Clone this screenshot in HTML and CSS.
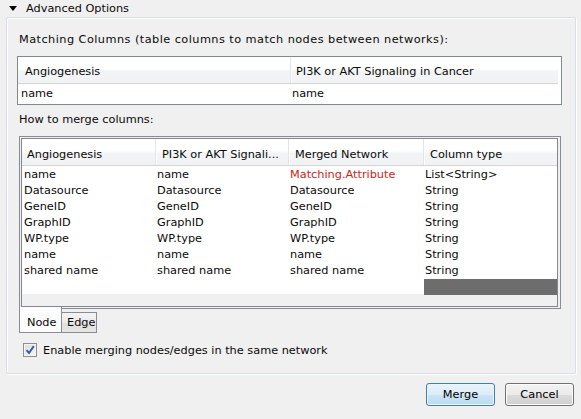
FILE: index.html
```html
<!DOCTYPE html>
<html>
<head>
<meta charset="utf-8">
<link rel="stylesheet" href="styles.css">
</head>
<body>
<div class="toggle"><span class="tri"></span><span>Advanced Options</span></div>
<div class="panel">
  <div class="label l1">Matching Columns (table columns to match nodes between networks):</div>
  <div class="table t1">
    <div class="thead g2">
      <div class="th first">Angiogenesis</div>
      <div class="th">PI3K or AKT Signaling in Cancer</div>
    </div>
    <div class="row1 g2">
      <div class="c1">name</div>
      <div class="c2">name</div>
    </div>
  </div>
  <div class="label l2">How to merge columns:</div>
  <div class="tabpane">
    <div class="tabcontent">
      <div class="scroll">
        <div class="t2">
          <div class="thead g4">
            <div class="th first">Angiogenesis</div>
            <div class="th">PI3K or AKT Signali...</div>
            <div class="th">Merged Network</div>
            <div class="th">Column type</div>
          </div>
          <div class="row g4"><div>name</div><div>name</div><div class="red">Matching.Attribute</div><div>List&lt;String&gt;</div></div>
          <div class="row g4"><div>Datasource</div><div>Datasource</div><div>Datasource</div><div>String</div></div>
          <div class="row g4"><div>GeneID</div><div>GeneID</div><div>GeneID</div><div>String</div></div>
          <div class="row g4"><div>GraphID</div><div>GraphID</div><div>GraphID</div><div>String</div></div>
          <div class="row g4"><div>WP.type</div><div>WP.type</div><div>WP.type</div><div>String</div></div>
          <div class="row g4"><div>name</div><div>name</div><div>name</div><div>String</div></div>
          <div class="row g4"><div>shared name</div><div>shared name</div><div>shared name</div><div>String</div></div>
          <div class="row g4"><div></div><div></div><div></div><div class="dark"></div></div>
        </div>
      </div>
    </div>
    <div class="tabs">
      <div class="tab sel">Node</div>
      <div class="tab">Edge</div>
    </div>
  </div>
  <div class="check">
    <span class="box"><svg width="12" height="12" viewBox="0 0 12 12"><path d="M2.5 6.2 L5 9 L9.8 2.2" fill="none" stroke="#3f5aa8" stroke-width="2"/></svg></span>
    <span>Enable merging nodes/edges in the same network</span>
  </div>
</div>
<div class="buttons">
  <button class="btn primary">Merge</button>
  <button class="btn">Cancel</button>
</div>
</body>
</html>
```
FILE: styles.css
```css
* { box-sizing: border-box; }
body {
  margin: 0;
  width: 581px;
  height: 419px;
  overflow: hidden;
  background: #f0f0f0;
  font-family: "DejaVu Sans", sans-serif;
  font-size: 11.3px;
  color: #0a0a0a;
}
.toggle {
  height: 17px;
  display: flex;
  align-items: center;
  padding-left: 9px;
}
.tri {
  width: 0;
  height: 0;
  border-left: 4px solid transparent;
  border-right: 4px solid transparent;
  border-top: 5px solid #000;
  margin-right: 9px;
}
.panel {
  margin: 0 5px 0 6px;
  height: 357px;
  border: 1px solid #d5dfe5;
  box-shadow: inset 1px 1px 0 #fff, 1px 1px 0 #fff;
  border-radius: 2px;
  padding: 15px 13px 0 10px;
}
.label {
  line-height: 14px;
  height: 14px;
  padding-left: 2px;
}
.l1 { letter-spacing: 0.45px; }
.l2 { margin-top: 8px; }
.table { background: #fff; }
.t1 {
  margin-top: 9px;
  width: 545px;
  border: 1px solid #828790;
  padding: 0 3px 3px 0;
}
.g2 { display: grid; grid-template-columns: 272px 268px; }
.g4 { display: grid; grid-template-columns: 133px 133px 135px 134px; }
.thead {
  height: 27px;
  background: linear-gradient(#ffffff 0%, #ffffff 45%, #f3f4f6 55%, #f1f2f4 100%);
  border-bottom: 1px solid #d5d5d5;
}
.th {
  display: flex;
  align-items: center;
  padding: 4px 0 0 6px;
  border-left: 1px solid #e3e4e6;
  box-shadow: inset 1px 0 0 #fff;
  white-space: nowrap;
  overflow: hidden;
}
.th.first { border-left: none; box-shadow: none; padding-left: 5px; }
.t1 .th { padding-top: 3px; padding-left: 5px; }
.t1 .th.first { padding-left: 7px; }
.row1 { height: 17px; align-items: center; }
.row1 > div { padding-top: 1px; }
.row1 .c1 { padding-left: 3px; }
.row1 .c2 { padding-left: 2px; }
.tabpane { margin-top: 9px; margin-left: 2px; width: 542px; }
.tabcontent {
  border: 1px solid #898c95;
  padding: 1px 2px 1px 1px;
}
.scroll {
  border: 1px solid #828790;
  background: #f0f0f0;
  height: 169px;
}
.t2 { background: #fff; }
.row { height: 16px; }
.row > div { padding-left: 2px; white-space: nowrap; height: 16px; line-height: 18px; }
.row > div.dark { background: #6d6d6d; margin: 1px 0 -1px 1px; }
.red { color: #c8261a; }
.tabs { display: flex; align-items: flex-start; }
.tab {
  margin-top: 3px;
  height: 21px;
  width: 35px;
  border: 1px solid #898c95;
  border-left: none;
  background: linear-gradient(#f3f3f3, #ebebeb 50%, #dedede 50%, #e6e6e6);
  padding-left: 5px;
  display: flex;
  align-items: center;
}
.tab.sel {
  margin-top: -2px;
  height: 26px;
  width: 43px;
  border: 1px solid #898c95;
  border-top: none;
  background: #fcfcfc;
  padding: 5px 0 0 7px;
}
.check {
  margin-top: 10px;
  height: 14px;
  display: flex;
  align-items: center;
  padding-left: 6px;
}
.box {
  width: 14px;
  height: 14px;
  border: 1px solid #8f8f8f;
  background: linear-gradient(135deg, #dcdcdc, #f6f6f6);
  box-shadow: inset 0 0 0 1px #f4f4f4;
  margin-right: 6px;
  display: flex;
  align-items: center;
  justify-content: center;
}
.buttons {
  display: flex;
  justify-content: flex-end;
  gap: 10px;
  padding-right: 7px;
  margin-top: 9px;
}
.btn {
  width: 69px;
  height: 23px;
  border: 1px solid #707070;
  border-radius: 3px;
  font-family: "DejaVu Sans", sans-serif;
  font-size: 11.3px;
  color: #000;
  padding: 0;
  background: linear-gradient(#f2f2f2, #ebebeb 50%, #dddddd 50%, #cfcfcf);
  box-shadow: inset 0 0 0 1px #fcfcfc;
}
.btn.primary {
  border-color: #3c7fb1;
  background: linear-gradient(#e8f3fc, #dcedf9 50%, #cbe4f5 50%, #bcdbf0);
  box-shadow: inset 0 0 0 1px #eef6fc;
}
```
